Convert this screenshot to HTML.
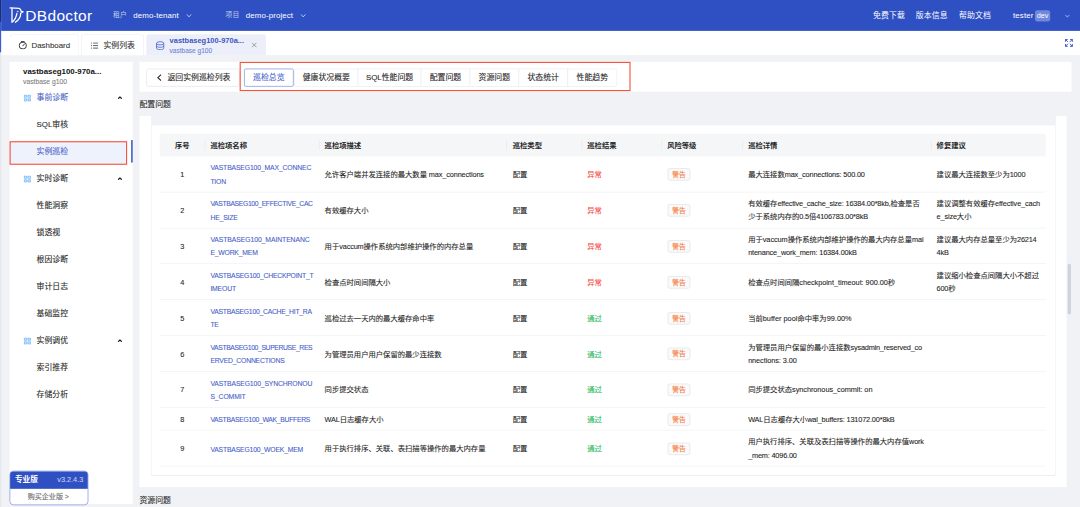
<!DOCTYPE html>
<html lang="zh-CN">
<head>
<meta charset="utf-8">
<title>DBdoctor</title>
<style>
*{box-sizing:border-box;margin:0;padding:0}
html,body{width:1080px;height:507px;overflow:hidden;background:#f0f2f5}
body{font-family:"Liberation Sans","Noto Sans CJK SC",sans-serif;color:#262626}
#app{position:absolute;left:0;top:0;width:1920px;height:902px;transform:scale(0.5625);transform-origin:0 0;background:#f0f2f5;overflow:hidden;font-size:14px;-webkit-text-stroke:.16px}
.abs{position:absolute}
/* header */
#hdr{position:absolute;left:0;top:0;width:1920px;height:55px;background:#2e50c3;color:#fff;-webkit-text-stroke:0}
#hdr .t{position:absolute;top:0;height:55px;line-height:55px;font-size:14px;letter-spacing:.2px;white-space:nowrap}
#hdr .dim{color:rgba(255,255,255,.72);font-size:12px}
#edge{position:absolute;left:0;top:0;width:1.5px;height:902px;background:#e3e6ee;z-index:9}
#edge i{position:absolute;left:0;width:1.5px;display:block}
/* tab bar */
#tabs{position:absolute;left:0;top:55px;width:1920px;height:43px;background:#fff}
.tab{position:absolute;top:6px;height:37px;border:1px solid #e9ebf0;border-bottom:none;border-radius:5px 5px 0 0;background:#fff;font-size:14px;color:#333;white-space:nowrap}
.tab .lbl{position:absolute;top:0;line-height:37px}
.tab.on{background:#eceff9;border-color:#eceff9}
/* sidebar */
#side{position:absolute;left:17px;top:110px;width:219px;height:786px;background:#fff}
#side .it{position:absolute;left:48px;font-size:14px;line-height:20px;color:#262626;white-space:nowrap}
#side .gp{position:absolute;left:48px;font-size:14px;line-height:20px;color:#262626;white-space:nowrap}
#side .gi{position:absolute;left:24.5px;width:13.5px;height:12.5px}
#side .car{position:absolute;left:192px;width:8.5px;height:5.2px}
/* main */
#tool{position:absolute;left:248px;top:110px;width:1657px;height:53px;background:#fff}
.btn{position:absolute;top:12px;height:32px;border:1px solid #e6e7eb;border-radius:4px;background:#fff;font-size:14px;line-height:30px;text-align:center;color:#262626;white-space:nowrap}
.btn.on{border-color:#5b76d6;color:#3f5fcf;z-index:2}
.sect{position:absolute;left:248px;font-size:14px;line-height:20px;color:#262626}
#card{position:absolute;left:248px;top:206px;width:1648px;height:660px;background:#fff}
#cardgap{position:absolute;left:21px;top:0;width:1607px;height:16.5px;background:#f0f2f5}
#inner{position:absolute;left:20px;top:0;width:1609px;height:640px;background:#fff;border:1px solid #e3e5ea;border-top:none;border-radius:0 0 4px 4px}
/* table */
#tbl{position:absolute;left:284px;top:238px;width:1575px;font-size:13px;color:#262626}
.tr{position:relative;width:1575px;border-bottom:1px solid #ebedf0}
.th{position:relative;width:1575px;height:40px;background:#f5f6f8;font-weight:bold;color:#262626;-webkit-text-stroke:0}
.c{position:absolute;top:0;height:100%;display:flex;align-items:center;padding:2px 10px 0;line-height:23.4px;white-space:nowrap}
.c1{left:0;width:80px;justify-content:center}
.c2{left:80px;width:205px;color:#4460c8;padding-top:3px}
.c2>div{transform:scaleX(.93);transform-origin:0 50%}
.c2h{left:80px;width:205px}
.c3{left:283px;width:333px}
.c4{left:616px;width:134px;padding-left:11.5px}
.c5{left:750px;width:142px}
.c6{left:892px;width:144px}
.c7{left:1036px;width:335px}
.c8{left:1371px;width:204px}
.th .c:before{content:"";position:absolute;left:0;top:11px;height:18px;width:1px;background:#e3e5ea}
.th .c1:before{display:none}
.r2{height:63.8px}
.r1{height:40.9px}
.bad{color:#f5473f}
.ok{color:#27b85a}
.tag{display:inline-block;height:22px;line-height:20px;padding:0 7px;font-size:12px;color:#f5793b;border:1px solid #dadbde;border-radius:4px;background:#fafafa;margin-left:1px}
</style>
</head>
<body>
<div id="app">
<div id="hdr">
  <svg class="abs" style="left:16px;top:12px" width="30" height="32" viewBox="0 0 30 32" fill="none" stroke="#fff" stroke-width="2.3" stroke-linejoin="round" stroke-linecap="round"><path d="M2 2.1L17.800 3Q21.500 4.200 21.300 7.800L25.100 9L20.700 11.500Q21.300 20.600 11.300 27.700"/><path d="M5.300 2.800V27.700Q12.600 21.700 14 11.700"/><circle cx="15.300" cy="8.500" r=".6" stroke-width="1.2"/></svg>
  <div class="t" style="left:45px;font-size:27.5px;letter-spacing:.6px;line-height:57px;-webkit-text-stroke:0">DBdoctor</div>
  <div class="t dim" style="left:201px">租户</div>
  <div class="t" style="left:237px">demo-tenant</div>
  <svg class="abs" style="left:331px;top:24px" width="10" height="8" viewBox="0 0 10 8" fill="none" stroke="#dfe5f7" stroke-width="1.4"><path d="M1 1.5 L5 6 L9 1.5"/></svg>
  <div class="t dim" style="left:401px">项目</div>
  <div class="t" style="left:437px">demo-project</div>
  <svg class="abs" style="left:534px;top:24px" width="10" height="8" viewBox="0 0 10 8" fill="none" stroke="#dfe5f7" stroke-width="1.4"><path d="M1 1.5 L5 6 L9 1.5"/></svg>
  <div class="t" style="left:1552px">免费下载</div>
  <div class="t" style="left:1628px">版本信息</div>
  <div class="t" style="left:1705px">帮助文档</div>
  <div class="t" style="left:1801px">tester</div>
  <div class="abs" style="left:1840px;top:17.500px;width:27px;height:20px;border-radius:4px;background:#6f88dc;font-size:13px;line-height:20px;text-align:center">dev</div>
  <svg class="abs" style="left:1893px;top:25px" width="9" height="7" viewBox="0 0 9 7" fill="none" stroke="#c9d3f2" stroke-width="1.3"><path d="M1 1.5 L4.5 5.5 L8 1.5"/></svg>
</div>
<div id="tabs">
  <div class="tab" style="left:17px;width:123px"><svg class="abs" style="left:15px;top:11px" width="15" height="15" viewBox="0 0 15 15" fill="none" stroke="#333" stroke-width="1.7"><rect x="1.3" y="2.300" width="12.4" height="11.4" rx="5"/><path d="M7.500 8.500L10.500 5.200M5 1h5" stroke-linecap="round"/></svg><span class="lbl" style="left:38px">Dashboard</span></div>
  <div class="tab" style="left:144px;width:112px"><svg class="abs" style="left:16px;top:13px" width="14" height="12" viewBox="0 0 14 12" fill="none" stroke="#333" stroke-width="1.4"><path d="M4.5 1.5h9M4.5 6h9M4.5 10.5h9M0.5 1.5h2M0.5 6h2M0.5 10.5h2"/></svg><span class="lbl" style="left:39px">实例列表</span></div>
  <div class="tab on" style="left:260px;width:213px">
    <svg class="abs" style="left:16px;top:10.500px" width="15.5" height="16.5" viewBox="0 0 18 19" fill="none" stroke="#4460c8" stroke-width="1.7"><ellipse cx="9" cy="4.5" rx="7.5" ry="3.3"/><path d="M1.5 4.5v10c0 1.8 3.4 3.3 7.5 3.3s7.5-1.5 7.5-3.3v-10M1.5 9.5c0 1.8 3.4 3.3 7.5 3.3s7.5-1.5 7.5-3.3"/></svg>
    <span class="lbl" style="left:40.500px;top:2px;line-height:18px;font-size:13.3px;font-weight:bold;color:#3d55bd;-webkit-text-stroke:0">vastbaseg100-970a...</span>
    <span class="lbl" style="left:40.500px;top:20px;line-height:16px;font-size:11.6px;color:#7088d8">vastbase g100</span>
    <svg class="abs" style="left:186px;top:12.500px" width="10" height="10" viewBox="0 0 10 10" fill="none" stroke="#777" stroke-width="1.2"><path d="M1 1L9 9M9 1L1 9"/></svg>
  </div>
  <svg class="abs" style="left:1893px;top:14.3px" width="14.5" height="14.5" viewBox="0 0 16 16" fill="none" stroke="#3f57c4" stroke-width="1.9"><path d="M1.2 5.800V1.2H5.800M1.2 1.2L6.200 6.200M14.800 5.800V1.2H10.200M14.800 1.2L9.800 6.200M1.2 10.200V14.800H5.800M1.2 14.800L6.200 9.800M14.800 10.200V14.800H10.200M14.800 14.800L9.800 9.800"/></svg>
</div>
<div id="side">
  <div class="abs" style="left:24px;top:6.500px;font-size:14px;font-weight:bold;line-height:20px;color:#111;white-space:nowrap;-webkit-text-stroke:0">vastbaseg100-970a...</div>
  <div class="abs" style="left:24px;top:26.500px;font-size:12px;line-height:16px;color:#808080;white-space:nowrap">vastbase g100</div>
  <svg class="gi" style="top:58px" viewBox="0 0 13.5 12.5" fill="none" stroke="#8cc3fa" stroke-width="2.1"><rect x="1.1" y="1.1" width="4.5" height="3.7" rx=".9"/><rect x="7.900" y="1.1" width="4.5" height="3.7" rx=".9"/><rect x="1.1" y="7.700" width="4.5" height="3.7" rx=".9"/><rect x="7.900" y="7.700" width="4.5" height="3.7" rx=".9"/></svg>
  <div class="gp" style="top:53px;color:#4a62c8">事前诊断</div>
  <svg class="car" style="top:61px" viewBox="0 0 10 6" fill="none" stroke="#222" stroke-width="2.6"><path d="M1.2 5.2 L5 1.6 L8.800 5.2"/></svg>
  <div class="it" style="top:101px;color:#262626">SQL审核</div>
  <div class="abs" style="left:0;top:141px;width:209px;height:42px;background:#eef2fd;border:2px solid #f4553c"></div>
  <div class="abs" style="left:216px;top:139px;width:3px;height:40px;background:#4a66d0"></div>
  <div class="it" style="top:149px;color:#4a62c8">实例巡检</div>
  <svg class="gi" style="top:202px" viewBox="0 0 13.5 12.5" fill="none" stroke="#8cc3fa" stroke-width="2.1"><rect x="1.1" y="1.1" width="4.5" height="3.7" rx=".9"/><rect x="7.900" y="1.1" width="4.5" height="3.7" rx=".9"/><rect x="1.1" y="7.700" width="4.5" height="3.7" rx=".9"/><rect x="7.900" y="7.700" width="4.5" height="3.7" rx=".9"/></svg>
  <div class="gp" style="top:197px;color:#262626">实时诊断</div>
  <svg class="car" style="top:205px" viewBox="0 0 10 6" fill="none" stroke="#222" stroke-width="2.6"><path d="M1.2 5.2 L5 1.6 L8.800 5.2"/></svg>
  <div class="it" style="top:245px;color:#262626">性能洞察</div>
  <div class="it" style="top:293px;color:#262626">锁透视</div>
  <div class="it" style="top:341px;color:#262626">根因诊断</div>
  <div class="it" style="top:389px;color:#262626">审计日志</div>
  <div class="it" style="top:437px;color:#262626">基础监控</div>
  <svg class="gi" style="top:490px" viewBox="0 0 13.5 12.5" fill="none" stroke="#8cc3fa" stroke-width="2.1"><rect x="1.1" y="1.1" width="4.5" height="3.7" rx=".9"/><rect x="7.900" y="1.1" width="4.5" height="3.7" rx=".9"/><rect x="1.1" y="7.700" width="4.5" height="3.7" rx=".9"/><rect x="7.900" y="7.700" width="4.5" height="3.7" rx=".9"/></svg>
  <div class="gp" style="top:485px;color:#262626">实例调优</div>
  <svg class="car" style="top:493px" viewBox="0 0 10 6" fill="none" stroke="#222" stroke-width="2.6"><path d="M1.2 5.2 L5 1.6 L8.800 5.2"/></svg>
  <div class="it" style="top:533px;color:#262626">索引推荐</div>
  <div class="it" style="top:581px;color:#262626">存储分析</div>
  <div class="abs" style="left:0;top:727px;width:140px;height:60.5px;border:1px solid #5b76d6;border-radius:7px;background:#fff;overflow:hidden">
    <div class="abs" style="left:-1px;top:-1px;width:140px;height:31.5px;background:#2e50c3"></div>
    <div class="abs" style="left:8.500px;top:5px;font-size:13.6px;font-weight:bold;line-height:20px;color:#fff;white-space:nowrap;-webkit-text-stroke:0">专业版</div>
    <div class="abs" style="right:8px;top:5px;font-size:13px;line-height:20px;color:#c3cdf0;white-space:nowrap">v3.2.4.3</div>
    <div class="abs" style="left:0;top:34.500px;width:136px;text-align:center;font-size:12.5px;line-height:20px;color:#666;white-space:nowrap">购买企业版 &gt;</div>
  </div>
</div>
<div id="tool">
  <div class="btn" style="left:12.1px;width:165.5px;text-align:left;padding-left:17.5px;border-color:#dcdfe6"><svg style="vertical-align:-2px;margin-right:10.5px" width="8.5" height="14" viewBox="0 0 8 12" fill="none" stroke="#262626" stroke-width="1.8"><path d="M7 1L1.5 6L7 11"/></svg>返回实例巡检列表</div>
  <div class="abs" style="left:178.0px;top:0;width:694.9px;height:52px;border:2px solid #f4553c"></div>
  <div class="btn on" style="left:186.3px;width:87.3px;border-radius:3px">巡检总览</div>
  <div class="btn g" style="left:274.7px;width:114.8px;border-radius:3px 0 0 3px">健康状况概要</div>
  <div class="btn g" style="left:388.4px;width:112.5px;border-radius:0">SQL性能问题</div>
  <div class="btn g" style="left:499.9px;width:87.9px;border-radius:0">配置问题</div>
  <div class="btn g" style="left:586.8px;width:87.8px;border-radius:0">资源问题</div>
  <div class="btn g" style="left:673.6px;width:88.1px;border-radius:0">状态统计</div>
  <div class="btn g" style="left:760.7px;width:88.5px;border-radius:0 3px 3px 0">性能趋势</div>
</div>
<div class="sect" style="top:175px">配置问题</div>
<div id="card"><div id="inner"></div><div id="cardgap"></div></div>
<div class="abs" style="left:1898px;top:469px;width:6px;height:90px;border-radius:3px;background:#cfd3de"></div>
<div class="sect" style="top:880px">资源问题</div>
<!--TBL--><div id="tbl">
  <div class="th"><div class="c c1">序号</div><div class="c c2h">巡检项名称</div><div class="c c3">巡检项描述</div><div class="c c4">巡检类型</div><div class="c c5">巡检结果</div><div class="c c6">风险等级</div><div class="c c7">巡检详情</div><div class="c c8">修复建议</div></div>
  <div class="tr r2"><div class="c c1">1</div><div class="c c2"><div><span style="letter-spacing:-0.24px">VASTBASEG100_MAX_CONNEC</span><br><span style="letter-spacing:-0.30px">TION</span></div></div><div class="c c3"><div>允许客户端并发连接的最大数量<span style="letter-spacing:-0.22px"> max_connections</span></div></div><div class="c c4">配置</div><div class="c c5 bad">异常</div><div class="c c6"><span class="tag">警告</span></div><div class="c c7"><div>最大连接数<span style="letter-spacing:-0.25px">max_connections: 500.00</span></div></div><div class="c c8"><div>建议最大连接数至少为<span style="letter-spacing:-0.30px">1000</span></div></div></div>
  <div class="tr r2"><div class="c c1">2</div><div class="c c2"><div><span style="letter-spacing:-0.67px">VASTBASEG100_EFFECTIVE_CAC</span><br><span style="letter-spacing:-0.30px">HE_SIZE</span></div></div><div class="c c3"><div>有效缓存大小</div></div><div class="c c4">配置</div><div class="c c5 bad">异常</div><div class="c c6"><span class="tag">警告</span></div><div class="c c7"><div>有效缓存<span style="letter-spacing:-0.30px">effective_cache_size: 16384.00*8kb,</span>检查是否<br>少于系统内存的<span style="letter-spacing:-0.32px">0.5</span>倍<span style="letter-spacing:-0.32px">4106783.00*8kB</span></div></div><div class="c c8"><div>建议调整有效缓存<span style="letter-spacing:-0.21px">effective_cach</span><br><span style="letter-spacing:-0.25px">e_size</span>大小</div></div></div>
  <div class="tr r2"><div class="c c1">3</div><div class="c c2"><div><span style="letter-spacing:-0.13px">VASTBASEG100_MAINTENANC</span><br><span style="letter-spacing:-0.36px">E_WORK_MEM</span></div></div><div class="c c3"><div>用于<span style="letter-spacing:-0.25px">vaccum</span>操作系统内部维护操作的内存总量</div></div><div class="c c4">配置</div><div class="c c5 bad">异常</div><div class="c c6"><span class="tag">警告</span></div><div class="c c7"><div>用于<span style="letter-spacing:-0.09px">vaccum</span>操作系统内部维护操作的最大内存总量<span style="letter-spacing:-0.09px">mai</span><br><span style="letter-spacing:-0.27px">ntenance_work_mem: 16384.00kB</span></div></div><div class="c c8"><div>建议最大内存总量至少为<span style="letter-spacing:-0.30px">26214</span><br><span style="letter-spacing:-0.25px">4kB</span></div></div></div>
  <div class="tr r2"><div class="c c1">4</div><div class="c c2"><div><span style="letter-spacing:-0.40px">VASTBASEG100_CHECKPOINT_T</span><br><span style="letter-spacing:-0.30px">IMEOUT</span></div></div><div class="c c3"><div>检查点时间间隔大小</div></div><div class="c c4">配置</div><div class="c c5 bad">异常</div><div class="c c6"><span class="tag">警告</span></div><div class="c c7"><div>检查点时间间隔<span style="letter-spacing:-0.07px">checkpoint_timeout: 900.00</span>秒</div></div><div class="c c8"><div>建议缩小检查点间隔大小不超过<br><span style="letter-spacing:-0.30px">600</span>秒</div></div></div>
  <div class="tr r2"><div class="c c1">5</div><div class="c c2"><div><span style="letter-spacing:-0.47px">VASTBASEG100_CACHE_HIT_RA</span><br><span style="letter-spacing:-0.30px">TE</span></div></div><div class="c c3"><div>巡检过去一天内的最大缓存命中率</div></div><div class="c c4">配置</div><div class="c c5 ok">通过</div><div class="c c6"><span class="tag">警告</span></div><div class="c c7"><div>当前<span style="letter-spacing:0.04px">buffer pool</span>命中率为<span style="letter-spacing:0.04px">99.00%</span></div></div><div class="c c8"><div></div></div></div>
  <div class="tr r2"><div class="c c1">6</div><div class="c c2"><div><span style="letter-spacing:-0.70px">VASTBASEG100_SUPERUSE_RES</span><br><span style="letter-spacing:-0.36px">ERVED_CONNECTIONS</span></div></div><div class="c c3"><div>为管理员用户用户保留的最少连接数</div></div><div class="c c4">配置</div><div class="c c5 ok">通过</div><div class="c c6"><span class="tag">警告</span></div><div class="c c7"><div>为管理员用户保留的最小连接数<span style="letter-spacing:-0.34px">sysadmin_reserved_co</span><br><span style="letter-spacing:-0.13px">nnections: 3.00</span></div></div><div class="c c8"><div></div></div></div>
  <div class="tr r2"><div class="c c1">7</div><div class="c c2"><div><span style="letter-spacing:-0.26px">VASTBASEG100_SYNCHRONOU</span><br><span style="letter-spacing:-0.14px">S_COMMIT</span></div></div><div class="c c3"><div>同步提交状态</div></div><div class="c c4">配置</div><div class="c c5 ok">通过</div><div class="c c6"><span class="tag">警告</span></div><div class="c c7"><div>同步提交状态<span style="letter-spacing:-0.07px">synchronous_commit: on</span></div></div><div class="c c8"><div></div></div></div>
  <div class="tr r1"><div class="c c1">8</div><div class="c c2"><div><span style="letter-spacing:-0.55px">VASTBASEG100_WAK_BUFFERS</span></div></div><div class="c c3"><div><span style="letter-spacing:-0.30px">WAL</span>日志缓存大小</div></div><div class="c c4">配置</div><div class="c c5 ok">通过</div><div class="c c6"><span class="tag">警告</span></div><div class="c c7"><div><span style="letter-spacing:-0.27px">WAL</span>日志缓存大小<span style="letter-spacing:-0.27px">wal_buffers: 131072.00*8kB</span></div></div><div class="c c8"><div></div></div></div>
  <div class="tr r2"><div class="c c1">9</div><div class="c c2"><div><span style="letter-spacing:-0.32px">VASTBASEG100_WOEK_MEM</span></div></div><div class="c c3"><div>用于执行排序、关联、表扫描等操作的最大内存量</div></div><div class="c c4">配置</div><div class="c c5 ok">通过</div><div class="c c6"><span class="tag">警告</span></div><div class="c c7"><div>用户执行排序、关联及表扫描等操作的最大内存值<span style="letter-spacing:-0.25px">work</span><br><span style="letter-spacing:-0.31px">_mem: 4096.00</span></div></div><div class="c c8"><div></div></div></div>
</div><!--/TBL-->
<div id="edge"><i style="top:0;height:39px;background:#1c2f73"></i><i style="top:39px;height:54px;background:#3b5ccb"></i></div>
</div>
</body>
</html>
